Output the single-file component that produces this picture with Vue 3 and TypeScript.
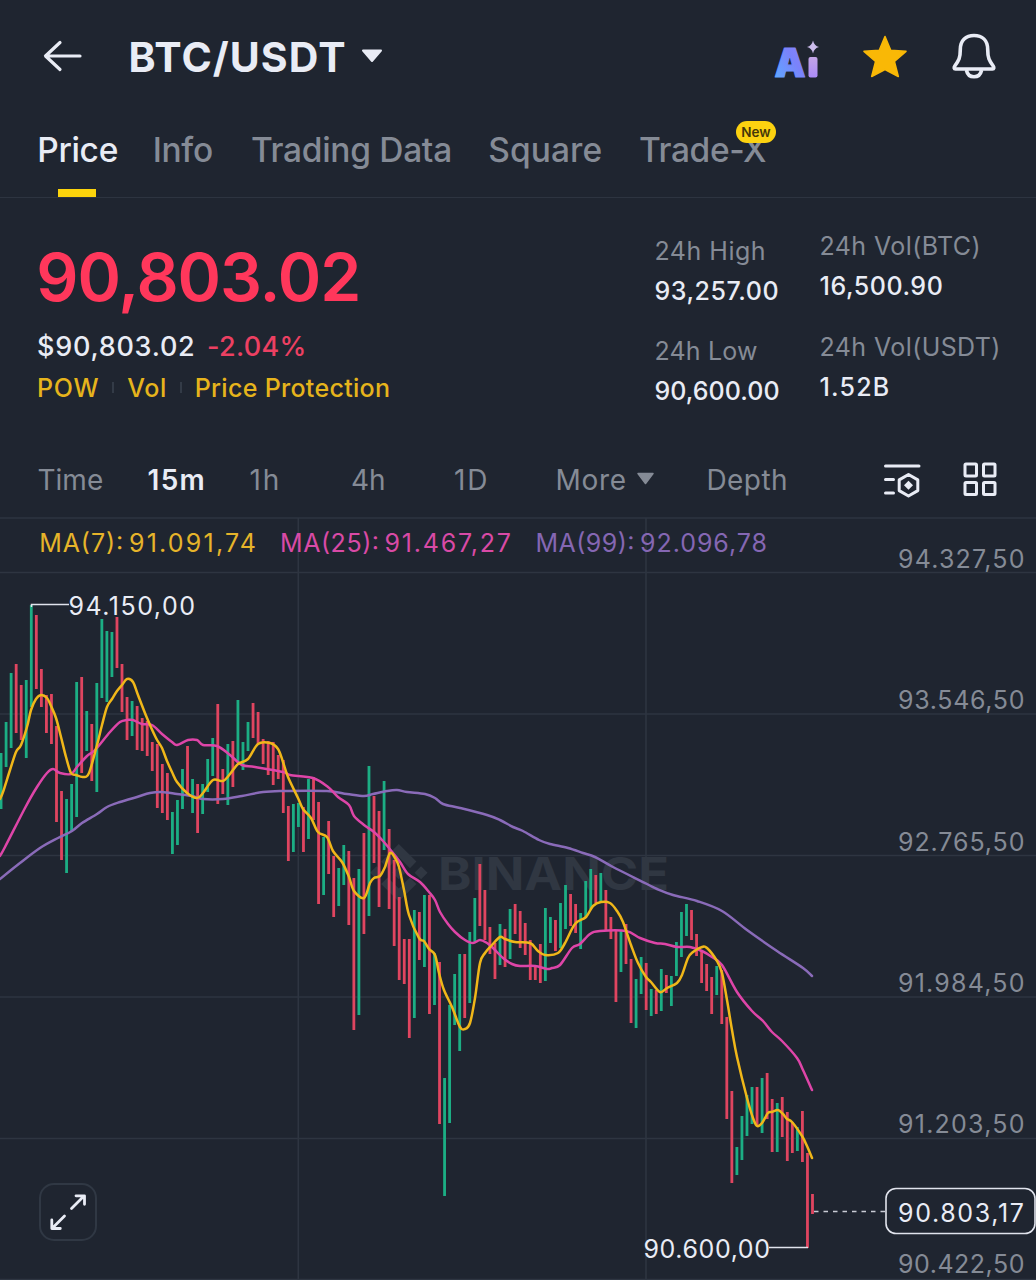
<script setup lang="ts">
interface Tab { label: string; cls: string; active?: boolean; badge?: string }
interface Stat { label: string; value: string; cls: string }
interface Candle { x: number; y: number; h: number; up: boolean }

const tabs: Tab[] = [
  { label: 'Price', cls: 'price', active: true },
  { label: 'Info', cls: 'info' },
  { label: 'Trading Data', cls: 'data' },
  { label: 'Square', cls: 'square' },
  { label: 'Trade-X', cls: 'tradex', badge: 'New' },
]

const stats: Stat[][] = [
  [
    { label: '24h High', value: '93,257.00', cls: 'high' },
    { label: '24h Low', value: '90,600.00', cls: 'low' },
  ],
  [
    { label: '24h Vol(BTC)', value: '16,500.90', cls: 'btc' },
    { label: '24h Vol(USDT)', value: '1.52B', cls: 'usdt' },
  ],
]

// one entry per candle: direction (g up, r down), high and low
const rawCandles = `g753-809 g722-767 g673-748 r664-733 r685-740 g680-758 g605-707 r615-689 r669-707 r695-733
r694-744 r726-822 r791-860 g799-873 g784-831 g682-817 r677-773 g711-751 r724-781 g683-792
g619-698 g631-702 g632-677 r617-668 r664-712 r697-740 g701-736 r706-750 r718-751 r721-756
r742-771 r744-808 r764-813 r773-820 g812-854 g800-845 g769-809 r746-794 g779-813 r784-833
g784-814 g759-792 g738-776 r704-804 r769-794 g744-805 r741-787 g700-763 g742-770 g722-751
r703-738 r712-744 r739-764 r741-775 r742-785 r755-779 r760-813 r806-861 g804-852 g803-827
r807-852 g779-839 r777-820 r802-904 g837-895 r821-874 r856-917 g868-906 g845-885 r851-925
r878-1030 g869-1015 r833-934 g766-916 r796-863 r811-907 g781-850 r829-909 r860-946 r897-980
r939-984 r939-1038 g910-1018 r912-960 g895-967 r895-1014 g953-1005 r962-1124 g1078-1196 g1005-1123
g974-1025 g954-1051 r954-1018 g932-1003 g898-942 r864-926 r890-940 r927-954 r943-979 g924-965
r929-967 g909-959 r904-934 r911-948 r923-955 r940-980 r965-980 r944-983 g908-981 g917-943
r920-951 g903-948 g885-929 r894-926 r904-933 g913-949 g881-918 g869-909 r875-903 g873-902
r890-930 r917-939 r930-1002 g930-972 r924-964 r959-1023 g979-1028 g957-994 r963-1010 g989-1016
r990-1014 g969-1011 r975-993 g976-1006 g942-976 g912-957 g904-936 r910-940 r934-956 r950-983
r964-991 r977-1014 g966-995 r970-1024 r1017-1119 r1091-1183 g1147-1175 g1116-1160 g1095-1136 g1087-1124
r1087-1125 g1078-1133 r1073-1119 r1099-1152 g1103-1152 r1097-1137 r1112-1161 r1122-1153 g1127-1151 r1111-1162
r1153-1248 r1194-1214`

const candles: Candle[] = rawCandles.split(/\s+/).map((c, i) => {
  const [top, bottom] = c.slice(1).split('-').map(Number)
  return { x: 1 + i * 5.04 - 1.35, y: top, h: bottom - top, up: c[0] === 'g' }
})

const ma7 = '0,799 3,792 10,770 16,752 21,745 27,727 31,710 36,699 41,695 47,698 51,706 56,718 61,737 66,757 71,773 76,775 83,777 89,773 97,745 102,725 107,707 112,699 117,691 122,685 127,679 133,682 138,695 147,718 156,738 162,748 167,761 172,772 177,782 187,793 197,798 203,793 213,780 223,781 230,774 238,764 248,759 258,744 270,743 278,749 283,762 288,777 298,798 303,809 311,818 318,832 327,837 333,851 342,862 349,877 354,891 364,898 370,883 374,878 380,876 385,867 390,853 395,858 399,867 404,890 409,915 419,938 424,941 429,949 435,955 439,973 444,990 452,1007 460,1027 465,1029 470,1023 475,998 480,963 485,953 492,945 500,937 505,939 515,942 530,943 538,951 545,955 558,953 565,943 575,924 586,917 593,906 601,902 610,903 617,911 623,922 631,945 638,963 646,977 651,982 660,992 667,988 677,983 682,975 688,958 693,952 702,947 707,948 717,961 722,973 727,1000 732,1030 737,1057 747,1098 753,1118 757,1126 762,1123 768,1113 772,1112 778,1110 783,1114 787,1119 792,1122 802,1136 807,1146 812,1158'
const ma25 = '0,856 5,847 25,808 37,787 47,773 53,769 60,773 71,774 77,767 87,756 95,750 110,732 120,722 127,720 133,720 142,724 152,725 162,734 172,742 177,745 188,740 197,740 203,745 217,746 230,755 242,765 255,767 283,772 290,775 313,778 328,787 338,797 349,805 354,816 364,825 374,832 383,841 393,853 400,862 408,874 420,882 429,892 435,900 440,912 448,924 455,932 465,940 473,943 480,940 487,943 493,948 503,958 512,964 520,966 535,966 547,969 552,968 560,965 572,948 580,944 590,934 600,931 626,931 640,938 655,943 665,944 677,947 690,947 702,951 712,957 722,965 737,992 752,1011 763,1021 772,1032 782,1041 797,1058 803,1070 812,1090'
const ma99 = '0,879 20,863 40,848 58,838 72,831 82,823 97,814 107,807 120,802 137,797 150,793 162,792 177,794 192,796 203,799 223,799 242,796 263,792 280,791 327,791 347,794 364,796 373,794 387,791 397,790 407,792 425,794 435,798 443,804 460,808 487,815 500,820 513,827 523,831 539,840 550,844 568,848 583,853 595,857 613,867 647,884 657,889 673,895 697,901 722,911 747,930 777,951 803,968 812,976'

// Catmull-Rom spline through the points of an average
function smooth(points: string): string {
  const p = points.split(' ').map(s => s.split(',').map(Number))
  let d = `M${p[0][0]} ${p[0][1]}`
  for (let i = 0; i < p.length - 1; i++) {
    const a = p[i - 1] ?? p[i]
    const b = p[i]
    const c = p[i + 1]
    const e = p[i + 2] ?? c
    d += `C${(b[0] + (c[0] - a[0]) / 6).toFixed(1)} ${(b[1] + (c[1] - a[1]) / 6).toFixed(1)} ${(c[0] - (e[0] - b[0]) / 6).toFixed(1)} ${(c[1] - (e[1] - b[1]) / 6).toFixed(1)} ${c[0]} ${c[1]}`
  }
  return d
}

const averages = [
  { cls: 'purple', d: smooth(ma99) },
  { cls: 'pink', d: smooth(ma25) },
  { cls: 'yellow', d: smooth(ma7) },
]

const legend = [
  { text: 'MA(7):', x: 39.2, w: 84, cls: 'yellow' },
  { text: '91.091,74', x: 129, w: 127, cls: 'yellow' },
  { text: 'MA(25):', x: 280, w: 99, cls: 'pink' },
  { text: '91.467,27', x: 384.5, w: 126.5, cls: 'pink' },
  { text: 'MA(99):', x: 535.5, w: 99, cls: 'purple' },
  { text: '92.096,78', x: 640, w: 127, cls: 'purple' },
]

const axis = [
  { text: '94.327,50', y: 568 },
  { text: '93.546,50', y: 709 },
  { text: '92.765,50', y: 851 },
  { text: '91.984,50', y: 992 },
  { text: '91.203,50', y: 1133 },
  { text: '90.422,50', y: 1273 },
]

const gridRows = [518, 572.5, 714, 855.5, 997, 1138.5, 1279.5]
const gridCols = [298.3, 646]
</script>

<template>
  <main class="screen">
    <header class="header">
      <svg class="back" width="44" height="36" viewBox="0 0 44 36"><path d="M18 4.500 3.500 18 18 31.500M4.500 18H38" /></svg>
      <h1 class="pair">BTC/USDT</h1>
      <svg class="caret" width="24" height="18" viewBox="0 0 24 18"><path d="M3 2.500h18L12 13z" /></svg>
      <svg class="ai" width="48" height="50" viewBox="0 0 48 50">
        <defs>
          <linearGradient id="aiA" x1="0" y1="1" x2="1" y2="0"><stop offset="0.1" stop-color="#5fa8ff" /><stop offset="0.6" stop-color="#7b82fb" /><stop offset="1" stop-color="#8f86f8" /></linearGradient>
          <linearGradient id="aiI" x1="0" y1="0" x2="0" y2="1"><stop offset="0" stop-color="#c3a5e6" /><stop offset="1" stop-color="#ab8bf8" /></linearGradient>
        </defs>
        <text x="1.500" y="38" textLength="31" lengthAdjust="spacingAndGlyphs" fill="url(#aiA)" stroke="url(#aiA)">A</text>
        <rect x="35.500" y="18" width="9" height="20.500" rx="2" fill="url(#aiI)" />
        <path d="M40 1.500q1.200 5.300 6 6.500-4.800 1.200-6 6.500-1.200-5.300-6-6.500 4.800-1.200 6-6.500z" fill="#cbbcec" />
      </svg>
      <svg class="star" width="48" height="48" viewBox="0 0 48 48"><path d="M24 3.500 29.700 17.300 45 18.300 33.400 28.400 37.300 43.500 24 36.500 10.700 43.500 14.600 28.400 3 18.300 18.300 17.300z" /></svg>
      <svg class="bell" width="48" height="50" viewBox="0 0 48 50"><path d="M5.500 38C4 38 3.800 36.500 4.800 35 8.800 29.500 10.300 27 10.300 18.500 10.300 9 16 4.500 24 4.500S37.700 9 37.700 18.500C37.700 27 39.200 29.500 43.200 35 44.200 36.500 44 38 42.500 38zM16.500 39.500C17.500 44 20.500 45.800 24 45.800S30.500 44 31.500 39.500" /></svg>
    </header>

    <nav class="tabs">
      <a v-for="t in tabs" :key="t.label" class="tab" :class="[t.cls, { active: t.active }]">
        {{ t.label }}<span v-if="t.badge" class="badge">{{ t.badge }}</span>
      </a>
    </nav>

    <section class="summary">
      <div class="quote">
        <div class="last">90,803.02</div>
        <div class="fiat"><span>$90,803.02</span><span class="change">-2.04%</span></div>
        <div class="tags"><span class="pow">POW</span><i /><span class="vol">Vol</span><i /><span>Price Protection</span></div>
      </div>
      <div v-for="(col, i) in stats" :key="i" class="stats" :class="{ second: i === 1 }">
        <dl v-for="s in col" :key="s.label" :class="s.cls">
          <dt>{{ s.label }}</dt>
          <dd>{{ s.value }}</dd>
        </dl>
      </div>
    </section>

    <nav class="intervals">
      <span class="time">Time</span>
      <span class="active">15m</span>
      <span>1h</span>
      <span class="four">4h</span>
      <span>1D</span>
      <span class="more">More<svg width="20" height="14" viewBox="0 0 20 14"><path d="M2 1.500h15L9.500 11.500z" /></svg></span>
      <span class="depth">Depth</span>
      <svg class="tool" width="40" height="40" viewBox="0 0 40 40">
        <path d="M3.500 6.500H37M3.500 20h8M3.500 33.500h8M26.500 15l9.300 5.400v10.700l-9.300 5.400-9.300-5.400v-10.700z" transform="translate(0 -.5)" />
        <path class="dot" d="M26.500 20.800 31 25.300 26.500 29.800 22 25.300z" />
      </svg>
      <svg class="tool" width="40" height="40" viewBox="0 0 40 40">
        <rect x="4" y="4" width="11.500" height="12" rx="1" /><rect x="22.500" y="4" width="11.500" height="12" rx="1" />
        <rect x="4" y="22.500" width="11.500" height="12" rx="1" /><rect x="22.500" y="22.500" width="11.500" height="12" rx="1" />
      </svg>
    </nav>

    <svg class="chart" width="1036" height="763" viewBox="0 517 1036 763">
      <g class="grid">
        <path v-for="y in gridRows" :key="y" :d="`M0 ${y}H1036`" />
        <path v-for="x in gridCols" :key="x" :d="`M${x} 518V1280`" />
      </g>
      <g class="watermark">
        <path transform="translate(370 844) scale(2.4)" d="M16.624 13.9202l2.7175 2.7154-7.353 7.353-7.353-7.352 2.7175-2.7164 4.6355 4.6595 4.6356-4.6595zm4.6366-4.6366L24 12l-2.7154 2.7164L18.5682 12l2.6924-2.7164zm-9.272.001l2.7163 2.6914-2.7164 2.7174v-.001L9.2721 12l2.7164-2.7154zm-9.2722-.001L5.4088 12l-2.6914 2.6924L0 12l2.7164-2.7164zM11.9885.0115l7.353 7.329-2.7174 2.7154-4.6356-4.6356-4.6355 4.6595-2.7174-2.7154 7.353-7.353z" />
        <text x="438" y="890" textLength="231" lengthAdjust="spacingAndGlyphs">BINANCE</text>
      </g>
      <rect v-for="(c, i) in candles" :key="i" :x="c.x" :y="c.y" width="2.800" :height="c.h" :class="c.up ? 'up' : 'down'" />
      <path v-for="a in averages" :key="a.cls" :d="a.d" class="average" :class="a.cls" />

      <text v-for="l in legend" :key="l.text" :x="l.x" y="552" :textLength="l.w" class="legend" :class="l.cls">{{ l.text }}</text>
      <text v-for="a in axis" :key="a.text" x="898" :y="a.y" textLength="126.500" class="axis">{{ a.text }}</text>

      <path class="leader" d="M31.500 607V604.500H69M769 1247.500H808" />
      <text x="68.500" y="614.500" textLength="126.500" class="mark">94.150,00</text>
      <text x="643.500" y="1258" textLength="126.500" class="mark">90.600,00</text>

      <path class="current" d="M814 1211.500H886" />
      <rect class="pill" x="886" y="1188.500" width="149" height="45" rx="10" />
      <text x="898" y="1221.500" textLength="126" class="mark">90.803,17</text>

      <rect class="expand" x="40" y="1184" width="56" height="56" rx="14" />
      <path class="arrows" d="M71.500 1208.500 84 1196M76 1195.800h8.500v8.500M64.500 1216 52 1228.500M51.800 1220v8.500H60.300" />
    </svg>
  </main>
</template>

<style>
body { margin: 0; background: #1f2530; }
</style>

<style scoped>
.screen {
  width: 1036px;
  height: 1280px;
  overflow: hidden;
  background: #1f2530;
  color: #e9ecf5;
  font-family: Inter, "Liberation Sans", sans-serif;
}
.header { display: flex; align-items: center; height: 110px; }
.header svg { flex: none; }
.back { margin: 2px 0 0 42px; fill: none; stroke: #e9ecf5; stroke-width: 3.200; stroke-linecap: round; stroke-linejoin: round; }
.pair { margin: 3px 0 0 42.500px; width: 216.500px; font-size: 41px; font-weight: 650; line-height: 50px; letter-spacing: 1.050px; white-space: nowrap; }
.caret { margin: 3px 0 0 15px; fill: #e9ecf5; stroke: #e9ecf5; stroke-width: 2; stroke-linejoin: round; }
.ai { margin: 18px 0 0 389px; font: 900 39.500px Inter, sans-serif; stroke-width: 1.200; stroke-linejoin: round; }
.star { margin: 3px 0 0 39.500px; fill: #f9b806; stroke: #f9b806; stroke-width: 1.600; stroke-linejoin: round; }
.bell { margin: 2px 0 0 41.500px; fill: none; stroke: #e9ecf5; stroke-width: 3.600; stroke-linejoin: round; }

.tabs {
  display: grid;
  grid-template-columns: 115.500px 98.200px 237.300px 150.800px 1fr;
  box-sizing: border-box;
  height: 88px;
  padding-left: 37.200px;
  border-bottom: 1.500px solid #2d3440;
}
.tab { position: relative; justify-self: start; height: 87px; font-size: 33.500px; font-weight: 500; line-height: 80px; letter-spacing: -0.300px; color: #858b96; white-space: nowrap; }
.tab.active { color: #e9ecf5; }
.tab.active::after { content: ""; position: absolute; left: 21.300px; bottom: 0; width: 37.500px; height: 8px; background: #fcd40c; }
.square { letter-spacing: 0.100px; }
.tradex { letter-spacing: -0.400px; }
.badge { position: absolute; left: 97px; top: 11px; width: 40px; height: 22px; border-radius: 11px; background: #fcd210; color: #44370a; font-size: 13.500px; font-weight: 600; line-height: 22px; letter-spacing: 0; text-align: center; }

.summary { display: flex; height: 243px; }
.quote { width: 617.500px; box-sizing: content-box; padding: 45px 0 0 37px; }
.last { margin-left: -0.700px; font-size: 66px; font-weight: 600; line-height: 68px; letter-spacing: -1.050px; color: #ff375b; }
.fiat { display: flex; margin-top: 16px; font-size: 27px; font-weight: 500; line-height: 40px; letter-spacing: 0.750px; }
.change { margin-left: 11.500px; letter-spacing: 0.300px; color: #ec4062; }
.tags { display: flex; align-items: center; margin-top: 0.900px; font-size: 25px; font-weight: 500; line-height: 40px; letter-spacing: 0.300px; color: #e6b41c; }
.tags .pow { letter-spacing: 0.800px; }
.tags .vol { letter-spacing: 0.700px; }
.tags i { width: 2px; height: 11px; margin: 0 13px 0 12.700px; background: #333b47; }
.stats { padding-top: 32.600px; width: 165px; font-size: 25px; line-height: 40px; white-space: nowrap; }
.stats.second { padding-top: 28.400px; }
dl { margin: 0 0 20.500px; }
dt { color: #858b96; letter-spacing: 0.400px; }
dd { margin: 0; letter-spacing: 0.550px; font-weight: 450; }
.high dt { letter-spacing: 0.500px; }
.usdt dd { letter-spacing: 1.200px; }
.low dt { letter-spacing: 0.150px; }
.low dd { letter-spacing: 0.050px; }

.intervals {
  display: grid;
  grid-template-columns: 110px 102px 101.500px 103px 101.500px 151px 175px 79px 1fr;
  align-items: center;
  height: 76px;
  padding-left: 37.500px;
  font-size: 28px;
  line-height: 40px;
  letter-spacing: 1.800px;
  color: #858b96;
}
.intervals span { position: relative; top: 0.800px; }
.intervals .time { letter-spacing: 0; }
.intervals .four { letter-spacing: 0; }
.intervals .active { font-weight: 600; letter-spacing: 1.300px; color: #e9ecf5; }
.intervals .more { letter-spacing: 0.700px; }
.intervals .depth { letter-spacing: 0.400px; }
.more svg { margin: 0 0 4px 9px; fill: #858b96; stroke: #858b96; stroke-width: 1.500; stroke-linejoin: round; }
.tool { margin: 1px 0 0 0; fill: none; stroke: #e9ecf5; stroke-width: 3; stroke-linecap: round; stroke-linejoin: round; }
.tool .dot { fill: #e9ecf5; stroke: none; }

.chart { display: block; font-size: 25px; }
.grid path { stroke: #2e3541; stroke-width: 1.600; }
.watermark { fill: #303742; font-size: 45px; font-weight: 700; }
.up { fill: #1cae84; }
.down { fill: #e04560; }
.average { fill: none; stroke-width: 2.500; stroke-linecap: round; stroke-linejoin: round; }
.average.yellow { stroke: #f0b719; }
.average.pink { stroke: #de45a8; }
.average.purple { stroke: #8a6bb9; }
.legend.yellow { fill: #e6b42a; }
.legend.pink { fill: #d94aa6; }
.legend.purple { fill: #8567b3; }
.axis { fill: #858b96; }
.mark { fill: #e9ecf5; }
.leader { fill: none; stroke: #e0e3ec; stroke-width: 1.500; }
.current { stroke: #c9ccd5; stroke-width: 1.600; stroke-dasharray: 4.500 5; }
.pill { fill: #1f2530; stroke: #e0e3ec; stroke-width: 1.600; }
.expand { fill: none; stroke: #303844; stroke-width: 2; }
.arrows { fill: none; stroke: #e9ecf5; stroke-width: 2.800; stroke-linecap: round; stroke-linejoin: round; }
</style>
